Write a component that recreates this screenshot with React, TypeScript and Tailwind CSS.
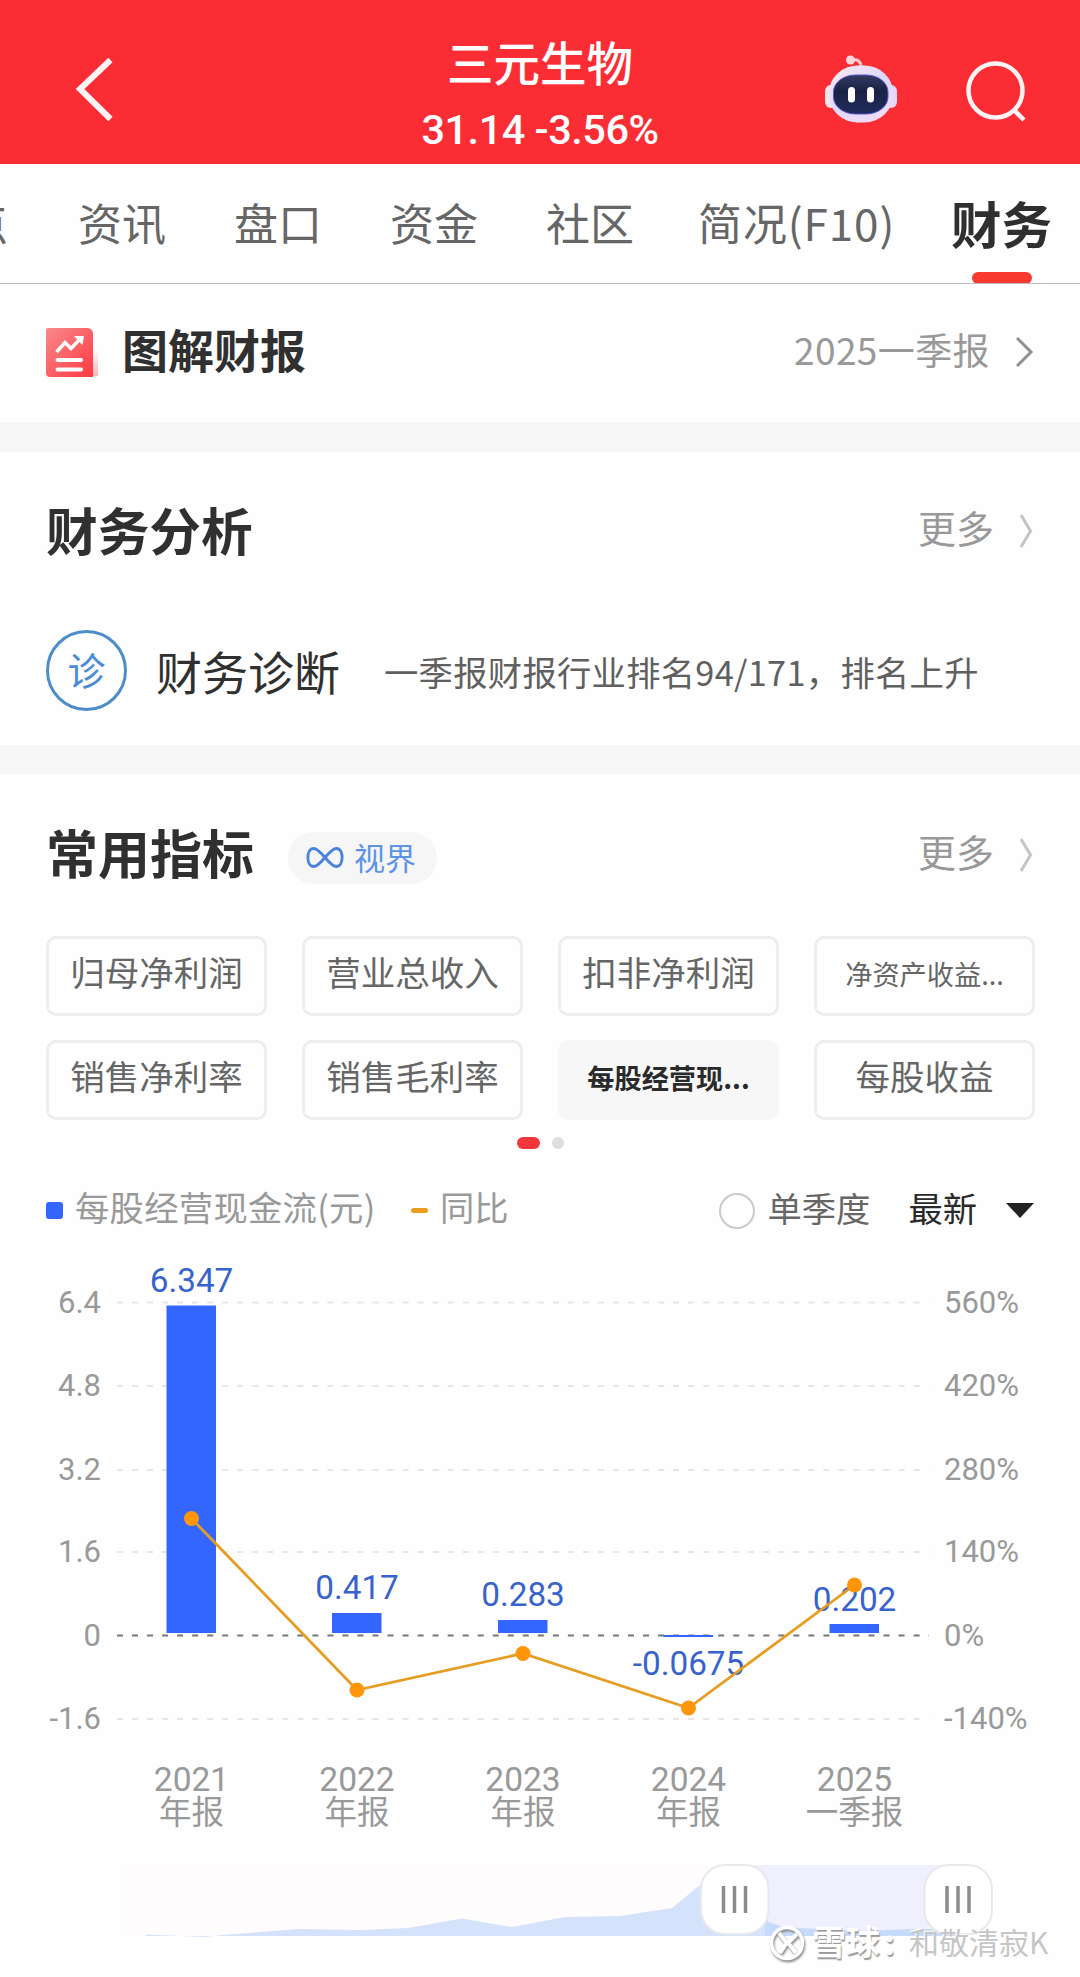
import { clsx } from 'clsx';

type Tab = { label: string; className: string };

const TABS: Tab[] = [
	{ label: '资讯', className: 'ml-[70px]' },
	{ label: '盘口', className: 'ml-[68px]' },
	{ label: '资金', className: 'ml-[68px]' },
	{ label: '社区', className: 'ml-[68px]' },
	{ label: '简况(F10)', className: 'ml-[64px] tracking-[0.9px]' }
];

type Indicator = { label: string; small?: boolean; active?: boolean };

const INDICATORS: Indicator[] = [
	{ label: '归母净利润' },
	{ label: '营业总收入' },
	{ label: '扣非净利润' },
	{ label: '净资产收益...', small: true },
	{ label: '销售净利率' },
	{ label: '销售毛利率' },
	{ label: '每股经营现...', small: true, active: true },
	{ label: '每股收益' }
];

// y values are relative to the top of the chart svg
const GRID = [
	{ y: 62.5, left: '6.4', right: '560%' },
	{ y: 146, left: '4.8', right: '420%' },
	{ y: 230, left: '3.2', right: '280%' },
	{ y: 312, left: '1.6', right: '140%' },
	{ y: 395.5, left: '0', right: '0%' },
	{ y: 479, left: '-1.6', right: '-140%' }
];

const PERIODS = [
	{ x: 191.5, year: '2021', name: '年报', value: '6.347', labelY: 52, barY: 65.5, barH: 327.5, lineY: 278.5 },
	{ x: 357, year: '2022', name: '年报', value: '0.417', labelY: 359, barY: 373, barH: 20, lineY: 450 },
	{ x: 523, year: '2023', name: '年报', value: '0.283', labelY: 366, barY: 380, barH: 13, lineY: 413.5 },
	{ x: 688.5, year: '2024', name: '年报', value: '-0.0675', labelY: 434.5, barY: 395, barH: 2, lineY: 468 },
	{ x: 854.5, year: '2025', name: '一季报', value: '0.202', labelY: 371, barY: 384, barH: 9, lineY: 345 }
];

const linePoints = PERIODS.map((p) => `${p.x},${p.lineY}`).join(' ');

const RobotIcon = () => (
	<svg className="h-[70px] w-[74px]" viewBox="823 54 74 70">
		<defs>
			<linearGradient id="robotHead" x1="0" y1="0" x2="0.7" y2="1">
				<stop offset="0" stopColor="#ffe9f0" />
				<stop offset="0.55" stopColor="#dcd8fb" />
				<stop offset="1" stopColor="#f3dcf6" />
			</linearGradient>
			<linearGradient id="robotFace" x1="0" y1="0" x2="0" y2="1">
				<stop offset="0" stopColor="#343a60" />
				<stop offset="0.4" stopColor="#1a2345" />
				<stop offset="1" stopColor="#1f2b5c" />
			</linearGradient>
		</defs>
		<path d="M851 60.5 C857 58.5 861 61 861 67" fill="none" stroke="#ffc9d2" strokeWidth="3" />
		<circle cx="850.5" cy="60" r="4.5" fill="#ffd5dc" />
		<rect x="825" y="85" width="12" height="23" rx="6" fill="#fbe3ee" />
		<rect x="885" y="85" width="12" height="23" rx="6" fill="#e2d8fa" />
		<rect x="829" y="65.5" width="64" height="57" rx="29" ry="27" fill="url(#robotHead)" />
		<rect x="833.5" y="75" width="54.5" height="39" rx="22" ry="17" fill="url(#robotFace)" stroke="#5b56c8" strokeWidth="1" />
		<rect x="848" y="87" width="7" height="15.5" rx="3.5" fill="#fff" />
		<rect x="867" y="87" width="7" height="15.5" rx="3.5" fill="#fff" />
	</svg>
);

const ReportIcon = () => (
	<svg className="h-[50px] w-[53px]" viewBox="0 0 53 50">
		<defs>
			<linearGradient id="report" x1="0" y1="0" x2="1" y2="1">
				<stop offset="0" stopColor="#f9898c" />
				<stop offset="1" stopColor="#fb3a41" />
			</linearGradient>
			<linearGradient id="reportEdge" x1="0" y1="0" x2="0" y2="1">
				<stop offset="0.2" stopColor="#fff" />
				<stop offset="1" stopColor="#f9b4b6" />
			</linearGradient>
		</defs>
		<path d="M44 14 L52 20 V48 H44 Z" fill="url(#reportEdge)" />
		<path d="M0 2 Q0 0 2 0 H42 Q47 1 47 6 V49 H4 Q0 49 0 45 Z" fill="url(#report)" />
		<path d="M10.5 24 L19 14.5 L25 20.5 L35 10" fill="none" stroke="#fff" strokeWidth="3.5" />
		<path d="M28 8 H38 L36.5 17 Z" fill="#fff" />
		<path d="M11.5 32 H35 M11.5 41.5 H35" stroke="#fff" strokeWidth="4" strokeLinecap="round" />
	</svg>
);

const MoreLink = () => (
	<div className="flex items-center text-[38px] leading-none text-[#999]">
		<span className="mt-[-8px]">更多</span>
		<svg className="ml-[24px] h-[36px] w-[16px]" viewBox="0 0 16 36">
			<path d="M3 2 L12.5 18 L3 34" fill="none" stroke="#c4c4c4" strokeWidth="3" />
		</svg>
	</div>
);

const Header = () => (
	<header className="flex h-[164px] items-start bg-[#fb2d34] text-white">
		<svg className="mt-[56px] ml-[74px] h-[68px] w-[42px]" viewBox="0 0 42 68">
			<path d="M36.5 4 L6 33 L36.5 63" fill="none" stroke="#fff4f4" strokeWidth="6" />
		</svg>
		<div className="ml-[234px] flex w-[380px] flex-col items-center">
			<h1 className="mt-[37px] text-[46.5px] leading-[48px] font-medium">三元生物</h1>
			<div className="mt-[21px] font-[Roboto] text-[41.5px] leading-[48px] font-medium tracking-[-0.5px] whitespace-nowrap">31.14 -3.56%</div>
		</div>
		<div className="mt-[54px] ml-[93px]">
			<RobotIcon />
		</div>
		<svg className="mt-[59px] ml-[66px] h-[66px] w-[66px]" viewBox="0 0 66 66">
			<circle cx="32.5" cy="31.5" r="27" fill="none" stroke="#fff4f4" strokeWidth="4.5" />
			<path d="M50 50 L61 61" stroke="#fff4f4" strokeWidth="4.5" />
		</svg>
	</header>
);

const TabBar = () => (
	<nav className="relative flex h-[120px] items-start overflow-hidden border-b border-[#bdbdbd] pt-[36px] text-[44px] leading-[44px] whitespace-nowrap text-[#666]">
		<span className="-ml-[80px]">热点</span>
		{TABS.map((tab) => (
			<span key={tab.label} className={tab.className}>
				{tab.label}
			</span>
		))}
		<div className="ml-auto flex h-full w-[129px] flex-col items-start">
			<span className="text-[50.5px] font-bold text-[#2f2f2f]">财务</span>
			<span className="mt-[28px] ml-[21px] h-[12px] w-[60px] shrink-0 rounded-full bg-[#f93a31]" />
		</div>
	</nav>
);

const IndicatorChip = ({ label, small, active }: Indicator) => (
	<div
		className={clsx(
			'flex h-[80px] items-center justify-center rounded-[10px] whitespace-nowrap',
			small ? 'pb-[6px] text-[27.2px]' : 'pb-[8px] text-[34.5px]',
			active ? 'bg-[#f7f7f7] font-bold text-[#2a2a2a]' : 'border-[3px] border-[#eeeeee] text-[#666]'
		)}
	>
		{label}
	</div>
);

const Legend = () => (
	<div className="mt-[36px] flex h-[50px] items-center pr-[46px] pl-[46px] text-[34.3px] leading-none">
		<span className="mt-[1px] h-[17px] w-[17px] rounded-[3px] bg-[#3366ff]" />
		<span className="ml-[12px] -mt-[7px] tracking-[0.3px] text-[#999]">每股经营现金流(元)</span>
		<span className="mt-[1px] ml-auto h-[5px] w-[17px] rounded-full bg-[#ec9d20]" />
		<span className="ml-[12px] -mt-[7px] text-[#999]">同比</span>
		<span className="mt-[1px] ml-[211px] h-[36px] w-[36px] rounded-full border-[2px] border-[#cacaca]" />
		<span className="ml-[12px] -mt-[6px] text-[#666]">单季度</span>
		<span className="ml-[38px] -mt-[6px] text-[#2a2a2a]">最新</span>
		<svg className="ml-[29px] h-[15px] w-[28px]" viewBox="0 0 28 15">
			<path d="M0 0 H28 L14 15 Z" fill="#222" />
		</svg>
	</div>
);

const Chart = () => (
	<svg className="block h-[600px] w-[1080px]" viewBox="0 0 1080 600">
		{GRID.map((g) => (
			<line
				key={g.right}
				x1="117"
				x2="929"
				y1={g.y}
				y2={g.y}
				stroke={g.left === '0' ? '#777' : '#e6e6e6'}
				strokeWidth="2.2"
				strokeDasharray="6 9.03"
			/>
		))}
		<g fontFamily="Roboto, sans-serif" fontSize="31" fill="#999">
			{GRID.map((g) => (
				<g key={g.right}>
					<text x="101" y={g.y + 10} textAnchor="end">
						{g.left}
					</text>
					<text x="944" y={g.y + 10}>
						{g.right}
					</text>
				</g>
			))}
		</g>
		{PERIODS.map((p) => (
			<g key={p.year}>
				<rect x={p.x - 25} y={p.barY} width="49.5" height={p.barH} fill="#3366ff" />
				<text x={p.x} y={p.labelY} textAnchor="middle" fontFamily="Roboto, sans-serif" fontSize="33.3" fill="#3863cc">
					{p.value}
				</text>
				<text x={p.x} y="551" textAnchor="middle" fontFamily="Roboto, sans-serif" fontSize="33.5" fill="#999">
					{p.year}
				</text>
				<text x={p.x} y="583.5" textAnchor="middle" fontSize="32.5" fill="#999">
					{p.name}
				</text>
			</g>
		))}
		<polyline points={linePoints} fill="none" stroke="#e79d22" strokeWidth="2.8" />
		{PERIODS.map((p) => (
			<circle key={p.year} cx={p.x} cy={p.lineY} r="7.5" fill="#ff960a" />
		))}
	</svg>
);

const SliderHandle = ({ x }: { x: number }) => (
	<g transform={`translate(${x} 0)`}>
		<rect x="1" y="5" width="67.5" height="69" rx="24" fill="#fff" stroke="#e9e9ec" strokeWidth="2" />
		<path d="M23.5 26 V53 M34.5 26 V53 M45.5 26 V53" stroke="#8c8c8c" strokeWidth="3.5" />
	</g>
);

const RangeSlider = () => (
	<svg className="block h-[80px] w-[1080px]" viewBox="0 0 1080 80">
		<rect x="121" y="5" width="839" height="71" fill="#fffcfd" />
		<rect x="735" y="5" width="225" height="71" fill="#f0effd" />
		<path
			d="M146 76 V74.5 L205 77 L222 75 L300 69 L360 70 L408 68 L462 58.5 L512 67 L565 57 L620 56 L672 48 L700 25 L735 5 L770 64 L785 67.5 L860 71 L920 69 H958 V76 Z"
			fill="#d5e2fb"
		/>
		<path d="M765 61 L785 67.5 L860 71 L920 69 H958 V76 H765 Z" fill="#c6dbf9" />
		<SliderHandle x={700} />
		<SliderHandle x={923.5} />
	</svg>
);

const Watermark = () => (
	<div className="absolute bottom-[13px] left-[769px] flex h-[42px] items-center leading-none whitespace-nowrap">
		<svg className="h-[42px] w-[38px] drop-shadow-[1px_2px_1px_#888]" viewBox="0 0 38 42">
			<circle cx="18" cy="21" r="15.5" fill="none" stroke="#fff" strokeWidth="3.5" />
			<path d="M10 11 L17 20 Q18 21 17 22 L11 31 M28 12 L20 20 Q19 21 20 22 L27 31" fill="none" stroke="#fff" strokeWidth="4" />
		</svg>
		<span className="-mt-[4px] ml-[5px] text-[34px] font-bold text-white [text-shadow:1px_2px_1px_#999]">雪球</span>
		<span className="-mt-[4px] w-[29px] pl-[4px] text-[34px] font-bold text-white [text-shadow:1px_2px_1px_#999]">:</span>
		<span className="-mt-[4px] text-[30px] text-[#c6c6c6] [text-shadow:-1px_-1px_0_#fff]">和敬清寂K</span>
	</div>
);

export default function App() {
	return (
		<div className="relative flex h-[1977px] w-[1080px] flex-col overflow-hidden bg-[#fefefe] font-['Noto_Sans_CJK_SC',sans-serif]">
			<Header />
			<TabBar />

			<section className="flex h-[138px] items-center pr-[46px] pl-[46px]">
				<ReportIcon />
				<h2 className="-mt-[10px] ml-[23px] text-[46px] leading-none font-bold text-[#303030]">图解财报</h2>
				<span className="-mt-[7px] ml-auto text-[37px] leading-none tracking-[0.4px] text-[#999]">2025一季报</span>
				<svg className="-mt-[3px] ml-[24px] h-[34px] w-[20px]" viewBox="0 0 20 34">
					<path d="M3 3 L17 17 L3 31" fill="none" stroke="#8f8f8f" strokeWidth="3" />
				</svg>
			</section>
			<div className="h-[30px] shrink-0 bg-[#f7f7f7]" />

			<section className="h-[293px] pr-[46px] pl-[46px]">
				<div className="flex h-[158px] items-center justify-between">
					<h2 className="-mt-[5px] text-[51.7px] leading-none font-bold text-[#303030]">财务分析</h2>
					<MoreLink />
				</div>
				<div className="mt-[19px] flex h-[82px] items-center">
					<div className="flex h-[81px] w-[81px] items-center justify-center rounded-full border-[3px] border-[#4d8dc9] pb-[2px] text-[38px] leading-none text-[#4a8cd6]">
						诊
					</div>
					<span className="ml-[29px] text-[46px] leading-none text-[#303030]">财务诊断</span>
					<span className="mt-[2px] ml-[44px] text-[34.3px] leading-none tracking-[0.3px] whitespace-nowrap text-[#606060]">一季报财报行业排名94/171，排名上升</span>
				</div>
			</section>
			<div className="h-[29px] shrink-0 bg-[#f7f7f7]" />

			<section>
				<div className="flex h-[162px] items-center pr-[46px] pl-[46px]">
					<h2 className="-mt-[7px] text-[52px] leading-none font-bold text-[#303030]">常用指标</h2>
					<div className="mt-[5px] ml-[34px] flex h-[52px] w-[149px] items-center rounded-full bg-[#f6f6f7] pl-[18px] text-[31px] leading-none text-[#5e93e6]">
						<svg className="h-[23px] w-[38px]" viewBox="0 0 40 24">
							<path
								d="M20 12 C15 6 11.5 2.5 8 2.5 C4 2.5 2 7 2 12 C2 17 4 21.5 8 21.5 C11.5 21.5 15 18 20 12 C25 6 28.5 2.5 32 2.5 C36 2.5 38 7 38 12 C38 17 36 21.5 32 21.5 C28.5 21.5 25 18 20 12 Z"
								fill="none"
								stroke="#4a82e0"
								strokeWidth="3"
							/>
						</svg>
						<span className="-mt-[3px] ml-[10px]">视界</span>
					</div>
					<div className="ml-auto">
						<MoreLink />
					</div>
				</div>
				<div className="grid grid-cols-4 gap-x-[35px] gap-y-[24px] pr-[45px] pl-[46px]">
					{INDICATORS.map((item) => (
						<IndicatorChip key={item.label} {...item} />
					))}
				</div>
				<div className="mt-[17px] flex h-[12px] justify-center gap-[12px]">
					<span className="h-[12px] w-[23px] rounded-full bg-[#f5363a]" />
					<span className="h-[12px] w-[12px] rounded-full bg-[#dedede]" />
				</div>
				<Legend />
				<div className="mt-[5px]">
					<Chart />
				</div>
				<div className="mt-[20px]">
					<RangeSlider />
				</div>
			</section>
			<Watermark />
		</div>
	);
}
